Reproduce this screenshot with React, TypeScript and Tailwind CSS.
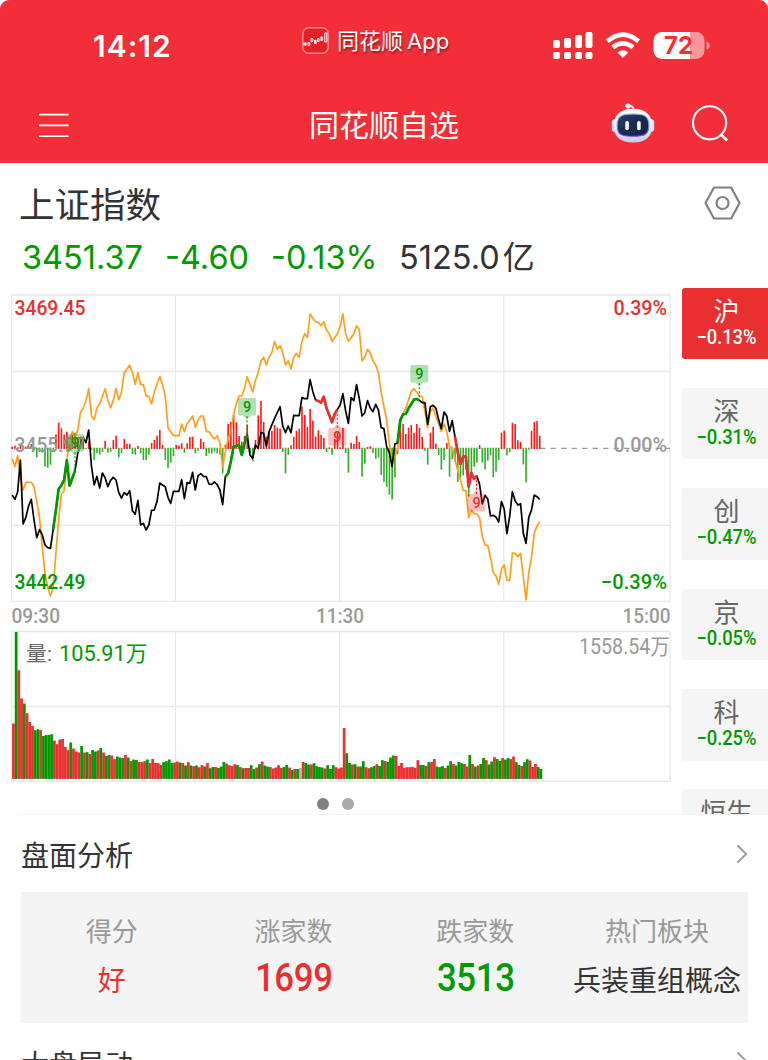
import React from "react";

const STEP = 8.2 / 3;
const px = (i: number) => 12.17 + i * STEP;
const py = (v: number) => 290 + v / 3;

const average = [
  506,530,496,565,600,577,577,577,590,635,682,770,850,892,918,893,790,690,612,602,510,450,425,440,420,367,355,332,296,377,
  389,354,342,320,296,330,354,330,296,330,306,248,236,226,248,283,248,283,284,318,319,342,306,283,260,284,318,413,425,437,
  437,437,402,425,401,390,378,412,390,378,378,425,425,437,447,437,460,530,485,447,425,375,342,318,318,295,260,283,306,271,
  248,213,202,225,202,188,154,178,167,188,225,213,237,202,190,202,155,131,142,72,85,96,97,107,96,120,131,154,143,131,
  108,72,131,154,143,131,107,119,213,202,178,190,213,225,248,307,350,390,460,510,500,475,400,370,355,330,305,296,306,318,
  319,365,412,365,354,380,400,424,402,425,470,472,510,540,570,601,602,683,660,671,672,683,740,765,767,802,848,858,883,837,
  825,871,871,789,790,800,790,860,930,848,802,730,708,695,
];

const price = [
  615,628,606,510,702,682,648,628,690,743,719,734,765,773,775,718,660,597,586,570,511,587,565,542,490,465,442,458,420,528,
  585,559,594,549,563,590,571,562,570,608,624,608,615,602,662,673,631,705,700,720,705,661,660,634,579,585,590,622,640,604,
  604,604,569,626,578,580,547,600,557,551,559,560,582,583,576,584,600,644,560,550,515,470,468,465,495,460,435,495,505,465,
  475,428,430,468,425,405,385,368,350,408,428,408,428,376,377,377,323,326,326,269,305,330,333,338,320,355,375,397,372,358,
  345,311,363,400,323,332,284,326,378,368,332,354,365,343,360,413,416,470,488,530,462,458,390,373,372,355,342,329,327,331,
  338,338,403,350,346,354,388,416,366,378,424,392,440,487,522,500,500,590,548,567,558,583,642,616,627,678,676,681,696,635,
  657,731,680,605,632,645,641,730,760,682,660,615,620,628,
];

const momentum = [
  470,467,472,465,472,470,468,462,480,502,486,488,530,533,524,479,433,398,415,434,425,440,435,428,445,440,455,477,455,479,
  510,490,494,486,453,488,485,450,437,502,490,447,461,462,492,494,468,490,510,510,494,459,450,437,420,465,510,534,518,498,
  465,467,460,488,460,441,440,490,482,446,456,498,490,491,485,490,494,550,464,402,396,374,397,438,455,438,405,490,514,450,
  376,333,396,440,425,423,405,413,416,486,550,494,466,441,423,416,350,375,411,357,392,440,421,435,444,486,472,494,447,425,
  472,413,489,548,458,462,438,456,560,521,471,469,489,506,502,555,576,590,614,628,562,493,400,402,432,413,405,428,402,413,
  441,482,524,428,410,461,496,539,510,459,560,508,515,576,565,556,540,620,545,530,518,465,517,538,512,496,562,545,510,428,
  422,496,487,398,402,451,456,523,577,479,423,396,393,437,
];

const volume =
  "r371 g96 r211 r296 g311 r340 r366 r378 g391 g388 r390 g408 g405 g405 g403 r422 r433 r419 r417 r441 r451 g428 r446 r455 r458 g438 r458 g457 r462 g450 " +
  "g455 r452 g444 r458 g468 g465 r467 r478 g470 g473 g474 r465 g473 r484 g479 g480 r486 r486 r484 g479 r489 r477 r489 r490 r495 g487 g484 g479 g489 r488 " +
  "r485 g488 r489 g497 r487 g497 r499 g497 r502 r495 g500 r490 g505 g501 r501 g504 g500 g486 r491 r496 r498 r493 g495 r502 g505 r504 r504 g496 g508 r503 " +
  "g493 r485 g497 g500 r501 r506 r503 r496 r504 g501 g495 r503 g510 r507 g507 n504 r486 g489 g494 r494 g490 g499 g501 g503 r506 g496 g507 g496 r502 r506 " +
  "r503 r384 g460 g489 r494 g493 r500 g500 g484 r502 r505 g502 g498 r493 g498 g481 r483 g486 g473 g467 r468 r498 r489 r504 r502 r502 r501 r504 r481 g495 " +
  "g495 r498 g487 r486 r477 g500 g502 g499 r504 g497 g484 r492 g497 g486 g490 r492 r500 g465 r492 g500 r497 g492 g474 r481 g494 g485 r472 g477 g483 r474 " +
  "g479 g474 r477 r470 g487 g495 r498 g487 g478 r482 r501 r492 g501 g507";

const VOLUME_COLORS: Record<string, string> = { r: "#e93030", g: "#009900", n: "#b4b4b4" };

const points = (data: number[], from = 0, to = data.length - 1) =>
  data
    .slice(from, to + 1)
    .map((v, k) => `${px(from + k).toFixed(2)},${py(v).toFixed(2)}`)
    .join(" ");

function Label(props: {
  x: number; y: number; w: number; size?: number; fill: string; weight?: number; end?: boolean; children: string;
}) {
  return (
    <text
      x={props.x}
      y={props.y}
      fill={props.fill}
      fontSize={props.size ?? 20.8}
      fontWeight={props.weight ?? 500}
      textLength={props.w}
      lengthAdjust="spacingAndGlyphs"
      textAnchor={props.end ? "end" : "start"}
    >
      {props.children}
    </text>
  );
}

function Marker({ x, y, up, stemTo, red }: { x: number; y: number; up?: boolean; stemTo: number; red?: boolean }) {
  const main = red ? "#e93030" : "#009900";
  return (
    <g>
      <line x1={x} x2={x} y1={up ? y : y + 18} y2={stemTo} stroke={main} strokeWidth="1" strokeDasharray="2.5 1.5" />
      <g fill={main} fillOpacity="0.3">
        <rect x={x - 9} y={y} width="18" height="17.5" rx="1.5" />
        <path d={up ? `M${x - 4} ${y}l4-4 4 4z` : `M${x - 4} ${y + 17.5}l4 4 4-4z`} />
      </g>
      <text x={x} y={y + 14} textAnchor="middle" fontSize="14.5" fontWeight="500" fill={main}>9</text>
    </g>
  );
}

function MarketChart() {
  return (
    <svg
      className="block h-[498px] w-[682px] shrink-0 font-[Roboto,'Noto_Sans_CJK_SC',sans-serif]"
      viewBox="0 288 682 498"
    >
      <g stroke="#e8e8e8" strokeWidth="1.3" fill="none">
        <path d="M11.7 295H670V601.3H11.7zM11.7 371.5H670M11.7 525.3H670M175.5 295V601M339.6 295V601M503.8 295V601" />
        <path d="M11.7 631.5H670V781.3H11.7zM11.7 706.5H670M175.5 631V781M339.6 631V781M503.8 631V781" />
      </g>
      <path d="M540 448.4H670" stroke="#999" strokeWidth="1.1" strokeDasharray="5.5 5" />

      {momentum.map((v, i) => {
        const up = v < 475;
        return (
          <rect
            key={i}
            x={px(i) - 0.75}
            y={up ? py(v) : 447.7}
            width="1.6"
            height={up ? 449 - py(v) : py(v) - 447.7}
            fill={up ? "#fb1818" : "#2cac20"}
          />
        );
      })}

      <polyline points={points(average)} fill="none" stroke="#ff9f1c" strokeWidth="1.7" strokeLinejoin="round" />
      <polyline points={points(price)} fill="none" stroke="#000" strokeWidth="1.7" strokeLinejoin="round" />
      {[15, 78, 141].map((s) => (
        <polyline key={s} points={points(price, s, s + 8)} fill="none" stroke="#009900" strokeWidth="2.7" strokeLinejoin="round" />
      ))}
      {[111, 162].map((s) => (
        <polyline key={s} points={points(price, s, s + 8)} fill="none" stroke="#e93030" strokeWidth="2.7" strokeLinejoin="round" />
      ))}

      <Label x={14.5} y={315.2} w={71} fill="#e93030">3469.45</Label>
      <Label x={667} y={315.2} w={53.5} fill="#e93030" end>0.39%</Label>
      <Label x={14.5} y={452.2} w={71} fill="#999">3455.97</Label>
      <Label x={667} y={452.2} w={53.5} fill="#999" end>0.00%</Label>
      <Label x={14.5} y={588.7} w={71} fill="#009900">3442.49</Label>
      <Label x={667} y={588.7} w={66} fill="#009900" end>−0.39%</Label>

      <Marker x={75} y={434} stemTo={470} />
      <Marker x={247} y={398} stemTo={434} />
      <Marker x={419.3} y={365} stemTo={399} />
      <Marker x={337.3} y={428} stemTo={408} up red />
      <Marker x={476.5} y={494} stemTo={476} up red />

      <Label x={11.5} y={623} w={48.5} fill="#999" weight={500}>09:30</Label>
      <Label x={316} y={623} w={48} fill="#999" weight={500}>11:30</Label>
      <Label x={670.5} y={623} w={48} fill="#999" weight={500} end>15:00</Label>

      {volume.split(" ").map((item, i) => {
        const top = 600 + Number(item.slice(1)) / 3;
        return (
          <g key={i} fill={VOLUME_COLORS[item[0]]}>
            <rect x={12 + i * STEP} y={top} width={STEP} height={778.8 - top} fillOpacity="0.82" />
            <rect x={12.25 + i * STEP} y={top} width={STEP - 0.5} height={778.8 - top} />
          </g>
        );
      })}

      <Label x={26} y={661.3} w={26} fill="#666" weight={400}>量:</Label>
      <Label x={59} y={661.3} w={88.5} fill="#009900" weight={400} size={21.5}>105.91万</Label>
      <Label x={670} y={654.3} w={91} fill="#999" weight={400} size={21.5} end>1558.54万</Label>
    </svg>
  );
}

function StatusBar() {
  return (
    <div className="flex h-[88px] items-start">
      <div className="ml-[93px] mt-[30px] w-[209px] font-[Inter,sans-serif] text-[30px] font-semibold leading-[33px] tracking-[1px]">14:12</div>
      <svg className="mt-[27px] h-[27px] w-[27px]" viewBox="0 0 27 27">
        <rect x=".8" y=".8" width="25.4" height="25.4" rx="6" fill="#e62024" stroke="#f88b8d" strokeWidth="1.5" />
        <path d="M1.5 15.5h3v3h-3zM12 13h2.5v4H12zM18.5 9.5h2.3V14h-2.3z" fill="#fff" />
        <path d="M6 15.5h1.8v3H6zM9 11.5h1.8v3H9zM15.6 11.5h1.5v3h-1.5zM22.8 6h2v9h-2z" fill="none" stroke="#fff" strokeWidth="1" />
      </svg>
      <div className="ml-[8px] mt-[25px] w-[215px] whitespace-nowrap font-[Inter,'Noto_Sans_CJK_SC',sans-serif] text-[22px] leading-8 [text-shadow:1px_2px_2px_rgba(90,0,0,.55)]">
        同花顺<span className="ml-1">App</span>
      </div>
      <svg className="mt-[31px] h-[29px] w-[158px]" viewBox="552 31 158 29">
        <g fill="#fff">
          <rect x="553" y="40" width="7" height="8" rx="2" />
          <rect x="564" y="38" width="7" height="10" rx="2" />
          <rect x="575" y="35" width="7" height="13" rx="2" />
          <rect x="585.5" y="32" width="7" height="16" rx="2" />
          <rect x="553" y="52" width="7" height="7" rx="2" />
          <rect x="564" y="52" width="7" height="7" rx="2" />
          <rect x="575" y="52" width="7" height="7" rx="2" />
          <rect x="585.5" y="52" width="7" height="7" rx="2" />
          <path d="M622.9 57.8l-5.4-5.3q5.4-4.4 10.8 0z" />
        </g>
        <path d="M607.3 41.3Q622.9 28 638.5 41.3M612.8 47.3Q622.9 39.3 633 47.3" fill="none" stroke="#fff" strokeWidth="4.7" />
        <path d="M662 32h28v27h-28a8.5 8.5 0 0 1-8.5-8.5v-10a8.5 8.5 0 0 1 8.5-8.5z" fill="#fff" />
        <path d="M690 32h6a8.5 8.5 0 0 1 8.5 8.5v10a8.5 8.5 0 0 1-8.5 8.5h-6z" fill="#f9979b" />
        <path d="M706.5 41.5q3.2 1 3.2 4t-3.2 4z" fill="#f9979b" />
        <text x="664" y="54.2" textLength="29" lengthAdjust="spacingAndGlyphs" fontFamily="Inter" fontWeight="700" fontSize="24.5" fill="#f22f38">72</text>
      </svg>
    </div>
  );
}

function Robot() {
  return (
    <svg className="h-[42px] w-[44px]" viewBox="0 0 44 42">
      <defs>
        <linearGradient id="shell" x1="0" y1="0" x2="0" y2="1">
          <stop offset="0" stopColor="#fff" />
          <stop offset=".65" stopColor="#e5e8ff" />
          <stop offset="1" stopColor="#c8cbf5" />
        </linearGradient>
        <linearGradient id="visor" x1="0" y1="0" x2="1" y2="1">
          <stop offset="0" stopColor="#2f4266" />
          <stop offset=".45" stopColor="#1c2c52" />
          <stop offset="1" stopColor="#17213f" />
        </linearGradient>
        <linearGradient id="rim" x1="0" y1="0" x2="0" y2="1">
          <stop offset="0" stopColor="#78c8dd" />
          <stop offset="1" stopColor="#7150df" />
        </linearGradient>
      </defs>
      <path d="M17.5 4q5-1 5.5 5" fill="none" stroke="#e4e8fa" strokeWidth="1.7" />
      <ellipse cx="17" cy="4" rx="2.7" ry="2.4" fill="#f7f9ff" />
      <rect x=".8" y="17" width="7" height="13" rx="3.5" fill="#dce2fc" />
      <rect x="36.2" y="17" width="7" height="13" rx="3.5" fill="#dce2fc" />
      <path d="M22 6.8c12 0 19.2 6 19.2 17S34.5 40.5 22 40.5 2.8 35 2.8 23.8 10 6.8 22 6.8z" fill="url(#shell)" />
      <path d="M22 12c11 0 15.8 1.8 15.8 11.2S34 34.2 22 34.2 6.2 33 6.2 23.2 11 12 22 12z" fill="url(#visor)" stroke="url(#rim)" strokeWidth="1.1" />
      <rect x="14.3" y="19" width="3.6" height="9.2" rx="1.8" fill="#fff" />
      <rect x="26.1" y="19" width="3.6" height="9.2" rx="1.8" fill="#fff" />
    </svg>
  );
}

function NavBar() {
  return (
    <div className="flex h-[75px] items-start">
      <svg className="ml-[38px] mt-[24px] h-[28px] w-[32px]" viewBox="0 0 32 28" stroke="#fff" strokeWidth="1.6">
        <path d="M1 2.6h29.5M1 13.4h29.5M1 24.2h29.5" />
      </svg>
      <h1 className="ml-[239px] mt-[15px] w-[302px] whitespace-nowrap text-[30px] leading-[40px] font-normal">同花顺自选</h1>
      <div className="mt-[14px]"><Robot /></div>
      <svg className="ml-[37px] mt-[17px] h-[38px] w-[38px]" viewBox="0 0 38 38" fill="none" stroke="#fff" strokeWidth="2.1">
        <circle cx="17.6" cy="17.8" r="16.6" />
        <path d="M29 29.5l6.1 6" strokeWidth="2.6" />
      </svg>
    </div>
  );
}

function SideTab({ name, value, active }: { name: string; value: string; active?: boolean }) {
  return (
    <div
      className={`flex h-[71.5px] shrink-0 flex-col items-center rounded-l-[3px] pl-[3px] pt-[6px] ${
        active ? "bg-[#e93030] text-white" : "bg-[#f5f5f5] text-[#666]"
      }`}
    >
      <div className="text-[26px] leading-[32px]">{name}</div>
      <div className={`origin-center scale-x-[0.92] whitespace-nowrap font-[Roboto,sans-serif] text-[20px] font-medium leading-[23px] tracking-[-0.1px] ${active ? "" : "text-[#009900]"}`}>
        {value}
      </div>
    </div>
  );
}

function Chevron() {
  return (
    <svg className="h-[20px] w-[12px]" viewBox="0 0 12 20" fill="none" stroke="#999" strokeWidth="1.8">
      <path d="M1.5 1.5L10.2 10L1.5 18.5" />
    </svg>
  );
}

export default function App() {
  return (
    <div className="h-[1060px] w-[768px] overflow-hidden bg-white font-['Noto_Sans_CJK_SC',sans-serif] text-[#333]">
      <header className="h-[163px] rounded-t-[9px] bg-[#f22f38] text-white">
        <StatusBar />
        <NavBar />
      </header>

      <section className="flex h-[125px] flex-col">
        <div className="flex h-[69px] items-start justify-between pl-[19px] pr-[27px]">
          <h2 className="mt-[16px] text-[35.5px] font-normal leading-[48px]">上证指数</h2>
          <svg className="mt-[23px] h-[34px] w-[37px]" viewBox="0 0 37 34" fill="none" stroke="#808080" strokeWidth="2.2">
            <path d="M10 1.5h17.2L35.5 17l-8.3 15.5H10L1.5 17z" strokeLinejoin="round" />
            <circle cx="18.5" cy="17" r="6" />
          </svg>
        </div>
        <div className="flex h-[52px] items-center whitespace-nowrap pl-[22px] font-[Inter,'Noto_Sans_CJK_SC',sans-serif] text-[32.5px] text-[#009900]">
          <span className="w-[143px]">3451.37</span>
          <span className="w-[106px]">-4.60</span>
          <span className="w-[128px]">-0.13%</span>
          <span className="text-[#333]">5125.0<span className="ml-[3px] text-[32px]">亿</span></span>
        </div>
      </section>

      <section className="flex h-[526px] overflow-hidden">
        <div className="flex w-[682px] shrink-0 flex-col">
          <MarketChart />
          <div className="ml-[317px] mt-[12px] flex gap-[13px]">
            <i className="size-[12px] rounded-full bg-[#808080]" />
            <i className="size-[12px] rounded-full bg-[#aaa]" />
          </div>
        </div>
        <div className="-mt-[0.5px] flex flex-1 flex-col gap-[28.9px]">
          <SideTab name="沪" value="−0.13%" active />
          <SideTab name="深" value="−0.31%" />
          <SideTab name="创" value="−0.47%" />
          <SideTab name="京" value="−0.05%" />
          <SideTab name="科" value="−0.25%" />
          <SideTab name="恒生" value="" />
        </div>
      </section>

      <section className="ml-[20px] h-[246px] border-t border-[#f4f4f4]">
        <div className="flex h-[77px] items-center justify-between pr-[20px]">
          <h3 className="ml-px text-[28px] font-normal leading-10">盘面分析</h3>
          <Chevron />
        </div>
        <div className="ml-px grid h-[131px] w-[727px] grid-cols-4 bg-[#f4f4f4] pt-[18px] text-center">
          <div>
            <div className="text-[26px] leading-[40px] text-[#999]">得分</div>
            <div className="mt-[9px] text-[28px] leading-[40px] text-[#e93030]">好</div>
          </div>
          <div>
            <div className="text-[26px] leading-[40px] text-[#999]">涨家数</div>
            <div className="mt-[8px] scale-x-[0.88] font-[Roboto,sans-serif] text-[39.5px] font-medium leading-[40px] tracking-[-0.3px] text-[#e93030]">1699</div>
          </div>
          <div>
            <div className="text-[26px] leading-[40px] text-[#999]">跌家数</div>
            <div className="mt-[8px] scale-x-[0.88] font-[Roboto,sans-serif] text-[39.5px] font-medium leading-[40px] tracking-[-0.3px] text-[#009900]">3513</div>
          </div>
          <div>
            <div className="text-[26px] leading-[40px] text-[#999]">热门板块</div>
            <div className="mt-[9px] whitespace-nowrap text-[28px] leading-[40px]">兵装重组概念</div>
          </div>
        </div>
        <div className="flex items-start justify-between pr-[20px] pt-[20px]">
          <h3 className="ml-px text-[28px] font-normal leading-10">大盘异动</h3>
          <div className="mt-[8px]"><Chevron /></div>
        </div>
      </section>
    </div>
  );
}
